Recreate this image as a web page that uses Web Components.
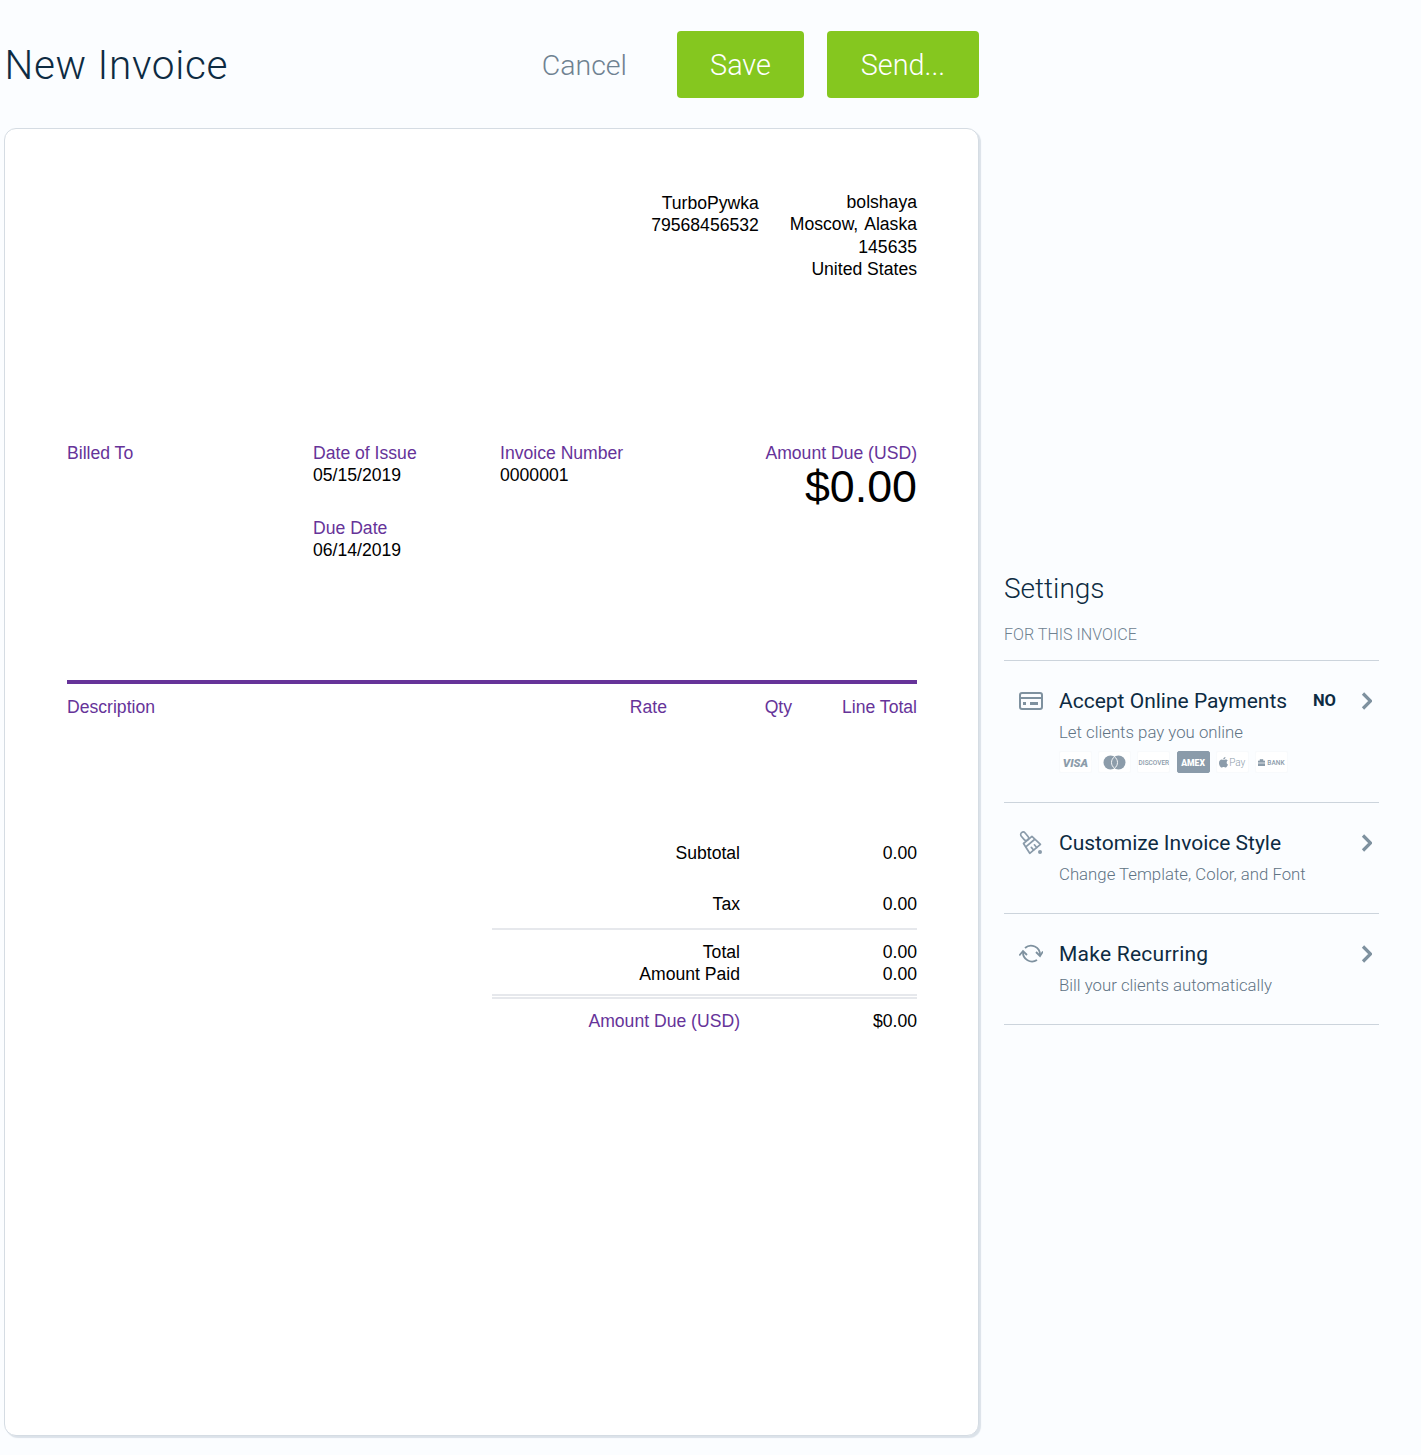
<!DOCTYPE html>
<html>
<head>
<meta charset="utf-8">
<title>New Invoice</title>
<style>
    html, body { margin: 0; padding: 0; background: #fbfdff; }
    body { font-family: Roboto, "Liberation Sans", sans-serif; }
</style>
</head>
<body>
<invoice-page></invoice-page>
<script>
class ActionBar extends HTMLElement {
    constructor() {
        super();
        this.attachShadow({ mode: 'open' }).innerHTML = `
        <style>
            :host { display: flex; align-items: center; width: 979px; height: 67px; padding: 31px 0 30px; color: #0d2b42; }
            h1 { flex: 1; margin: 0; padding: 2px 0 0 4.5px; font: 300 40.5px/65px Roboto, sans-serif; letter-spacing: .7px; }
            .cancel { margin-right: 50px; padding-top: 2px; font-size: 28.5px; font-weight: 300; color: #6f8291; }
            .btn { box-sizing: border-box; height: 67px; padding-top: 2px; line-height: 65px; text-align: center; border-radius: 4px; background: #85c71f; color: #fff; font-size: 28.8px; font-weight: 300; }
            .save { width: 127px; margin-right: 23px; }
            .send { width: 152px; }
        </style>
        <h1>New Invoice</h1>
        <span class="cancel">Cancel</span>
        <span class="btn save">Save</span>
        <span class="btn send">Send...</span>`;
    }
}

class InvoiceCard extends HTMLElement {
    constructor() {
        super();
        this.attachShadow({ mode: 'open' }).innerHTML = `
        <style>
            :host { display: block; box-sizing: border-box; width: 975px; height: 1308px; margin-left: 4px; padding: 62.6px 61px 0 62px;
                background: #fff; border: 1px solid #d5dce3; border-radius: 12px; box-shadow: 2px 2px 1px #dbe2e9;
                font: 17.6px/22.4px "Liberation Sans", Arial, sans-serif; color: #000; }
            .label { color: #663399; }
            .from { display: flex; justify-content: flex-end; gap: 31px; height: 250.4px; text-align: right; }
            .address { margin-top: -.6px; }
            .wide { margin-left: 2px; }
            .meta { display: grid; grid-template-columns: 246px 187px 1fr auto; height: 238px; }
            .due { margin-top: 30px; }
            .amount { text-align: right; }
            .big { font-size: 44.8px; line-height: 44px; }
            .rule { height: 4px; background: #663399; }
            .lines { display: grid; grid-template-columns: 1fr 100px 125px 125px; margin-top: 12px; height: 146px; }
            .lines span + span { text-align: right; }
            .totals { display: grid; grid-template-columns: 248px 177px; width: 425px; margin-left: auto; text-align: right; }
            .totals .gapped { padding-bottom: 28.6px; }
            .totals .tax { padding-bottom: 12.6px; }
            .sep { grid-column: 1 / 3; height: 2px; background: #e6e8ec; }
            .sep.one { margin-bottom: 11px; }
            .sep.two { margin-top: 8px; }
            .sep.three { margin-top: 1px; margin-bottom: 11px; }
        </style>
        <div class="from">
            <div>TurboPywka<br>79568456532</div>
            <div class="address">bolshaya<br>Moscow,<span class="wide"> </span>Alaska<br>145635<br>United States</div>
        </div>
        <div class="meta">
            <div class="label">Billed To</div>
            <div>
                <div class="label">Date of Issue</div>
                <div>05/15/2019</div>
                <div class="label due">Due Date</div>
                <div>06/14/2019</div>
            </div>
            <div>
                <div class="label">Invoice Number</div>
                <div>0000001</div>
            </div>
            <div class="amount">
                <div class="label">Amount Due (USD)</div>
                <div class="big">$0.00</div>
            </div>
        </div>
        <div class="rule"></div>
        <div class="lines label">
            <span>Description</span><span>Rate</span><span>Qty</span><span>Line Total</span>
        </div>
        <div class="totals">
            <div class="gapped">Subtotal</div><div class="gapped">0.00</div>
            <div class="tax">Tax</div><div class="tax">0.00</div>
            <div class="sep one"></div>
            <div>Total</div><div>0.00</div>
            <div>Amount Paid</div><div>0.00</div>
            <div class="sep two"></div>
            <div class="sep three"></div>
            <div class="label">Amount Due (USD)</div><div>$0.00</div>
        </div>`;
    }
}

class PayBadge extends HTMLElement {
    constructor() {
        super();
        this.attachShadow({ mode: 'open' }).innerHTML = `
        <style>
            :host { display: flex; align-items: center; justify-content: center; gap: 1px; box-sizing: border-box; width: 33px; height: 22px; padding-top: 1px;
                background: #fff; border: 1px solid #f8fafc; border-radius: 2px; color: #8c9caa; overflow: hidden;
                font: 700 7px/20px Roboto, sans-serif; white-space: nowrap; }
            :host([dark]) { background: #8a9baa; border-color: #8a9baa; color: #fff; }
        </style>
        <slot></slot>`;
    }
}

class SettingRow extends HTMLElement {
    constructor() {
        super();
        this.attachShadow({ mode: 'open' }).innerHTML = `
        <style>
            :host { display: grid; grid-template-columns: 55px 1fr auto 36px 7px; grid-template-rows: 24px auto; box-sizing: border-box;
                padding: 28px 0 29.5px; border-bottom: 1px solid #ccd4dc; }
            .icon { display: flex; justify-content: flex-start; padding-left: 15px; height: 24px; align-items: center; }
            .title { font-size: 21px; line-height: 24px; color: #0d2b42; }
            .state { font-size: 16.5px; font-weight: 700; line-height: 24px; color: #0d2b42; }
            .chev { grid-column: 4; display: flex; align-items: center; justify-content: flex-end; height: 24px; }
            .sub { grid-column: 2 / 6; margin-top: 8.5px; font-size: 16.8px; line-height: 20px; font-weight: 300; color: #5f7384; }
            .extra { grid-column: 2 / 6; }
            .extra ::slotted(*) { margin-top: 9.5px; margin-bottom: -.5px; }
        </style>
        <div class="icon"><slot name="icon"></slot></div>
        <div class="title"><slot name="title"></slot></div>
        <div class="state"><slot name="state"></slot></div>
        <div class="chev">
            <svg width="11" height="18" viewBox="0 0 11 18"><path d="M2 1.500L9.500 9 2 16.500" fill="none" stroke="#7e919f" stroke-width="3.200"/></svg>
        </div>
        <div class="sub"><slot name="sub"></slot></div>
        <div class="extra"><slot name="extra"></slot></div>`;
    }
}

class SettingsPanel extends HTMLElement {
    constructor() {
        super();
        this.attachShadow({ mode: 'open' }).innerHTML = `
        <style>
            :host { display: block; width: 375px; margin-left: 25px; padding-top: 572px; }
            h2 { margin: 0; font: 300 28px/34px Roboto, sans-serif; color: #0d2b42; }
            .for { margin-top: 19px; padding-bottom: 15px; font-size: 16.1px; line-height: 20px; font-weight: 300; color: #6f8291; border-bottom: 1px solid #ccd4dc; }
            .cards { display: flex; gap: 6.200px; }
            svg { display: block; }
            i { font-size: 11.5px; font-weight: 900; }
            .thin { font-size: 10px; font-weight: 300; }
        </style>
        <h2>Settings</h2>
        <div class="for">FOR THIS INVOICE</div>
        <setting-row>
            <svg slot="icon" width="24" height="18" viewBox="0 0 24 18" fill="none" stroke="#7e919f" stroke-width="2">
                <rect x="1" y="1" width="22" height="16" rx="2"/><path d="M1 6h22"/><path d="M4 11.500h3M11 11.500h8" stroke-width="3"/>
            </svg>
            <span slot="title">Accept Online Payments</span>
            <span slot="state">NO</span>
            <span slot="sub">Let clients pay you online</span>
            <div slot="extra" class="cards">
                <pay-badge><i>VISA</i></pay-badge>
                <pay-badge><svg width="23" height="15" viewBox="0 0 23 15"><circle cx="7.500" cy="7.500" r="7" fill="#8c9caa"/><circle cx="15.500" cy="7.500" r="7" fill="#8c9caa"/><path d="M11.500 1.760A7 7 0 0 1 11.500 13.240A7 7 0 0 1 11.500 1.760z" fill="none" stroke="#fff" stroke-width=".9"/></svg></pay-badge>
                <pay-badge><span style="font-size:6.500px;font-weight:500">DISCOVER</span></pay-badge>
                <pay-badge dark><span style="font-size:8.600px;font-weight:900">AMEX</span></pay-badge>
                <pay-badge><svg width="9" height="11" viewBox="0 0 9 11"><path d="M6.500 0c0 1.300-1 2.500-2.300 2.500C4.100 1.200 5.200.2 6.500 0zM4.500 3c.7 0 1.300-.5 2.300-.5.800 0 1.600.4 2 1.100-1.700 1-1.400 3.300.2 4-.5 1.300-1.400 2.900-2.400 2.900-.8 0-1.100-.5-2-.5s-1.300.5-2 .5C1.300 10.500 0 7.800 0 6c0-2.200 1.400-3.400 2.700-3.400.7 0 1.300.4 1.800.4z" fill="#8c9caa"/></svg><span class="thin">Pay</span></pay-badge>
                <pay-badge><svg width="7" height="7" viewBox="0 0 7 7" style="margin-right:1px"><path d="M0 2h7v5H0zM2 2V.5h3V2" fill="#8c9caa" stroke="#8c9caa" stroke-width=".6"/><path d="M0 4h7" stroke="#fff" stroke-width=".7"/></svg><span style="font-size:6.500px;font-weight:500">BANK</span></pay-badge>
            </div>
        </setting-row>
        <setting-row>
            <svg slot="icon" width="24" height="24" viewBox="0 0 24 24" fill="none" stroke="#8a9baa" stroke-width="1.700" stroke-linejoin="round" stroke-linecap="round">
                <g transform="rotate(-40 10 10.500)">
                    <rect x="7.500" y="-1" width="5" height="9.500" rx="2.500"/>
                    <path d="M4.500 8.500h11L17 20H3z"/>
                    <path d="M4.500 12.500h11M8 20v-3.500M12 20v-3.500"/>
                </g>
                <circle cx="21" cy="21" r="2" fill="#8a9baa" stroke="none"/>
            </svg>
            <span slot="title">Customize Invoice Style</span>
            <span slot="sub">Change Template, Color, and Font</span>
        </setting-row>
        <setting-row>
            <svg slot="icon" width="24" height="22" viewBox="0 0 24 22" fill="none" stroke="#7e919f" stroke-width="1.800">
                <path d="M6 5A9 9 0 0 1 21 12"/><path d="M17 9L21 13 24 8.500"/>
                <path d="M4 9A9 9 0 0 0 18 17"/><path d="M.3 12.500L4 8 8 12"/>
            </svg>
            <span slot="title" style="letter-spacing:.25px">Make Recurring</span>
            <span slot="sub">Bill your clients automatically</span>
        </setting-row>`;
    }
}

class InvoicePage extends HTMLElement {
    constructor() {
        super();
        this.attachShadow({ mode: 'open' }).innerHTML = `
        <style>
            :host { display: flex; align-items: flex-start; height: 1455px; overflow: hidden; }
        </style>
        <div>
            <action-bar></action-bar>
            <invoice-card></invoice-card>
        </div>
        <settings-panel></settings-panel>`;
    }
}

customElements.define('action-bar', ActionBar);
customElements.define('invoice-card', InvoiceCard);
customElements.define('pay-badge', PayBadge);
customElements.define('setting-row', SettingRow);
customElements.define('settings-panel', SettingsPanel);
customElements.define('invoice-page', InvoicePage);
</script>
</body>
</html>
